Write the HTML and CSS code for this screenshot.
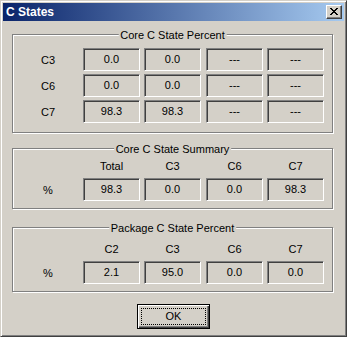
FILE: index.html
```html
<!DOCTYPE html>
<html lang="en">
<head>
    <meta charset="UTF-8">
    <title>C States</title>
    <link rel="stylesheet" href="styles.css">
</head>
<body>

  <div class="window">
    <div class="titlebar">
      <span class="title">C States</span>
      <button class="close-btn" aria-label="Close">
        <svg width="8" height="7" viewBox="0 0 8 7" shape-rendering="crispEdges">
          <path fill="#000" d="M0 0h2v1H0zM6 0h2v1H6zM1 1h2v1H1zM5 1h2v1H5zM2 2h4v1H2zM3 3h2v1H3zM2 4h4v1H2zM1 5h2v1H1zM5 5h2v1H5zM0 6h2v1H0zM6 6h2v1H6z"/>
        </svg>
      </button>
    </div>

    <div class="content">

      <!-- Per core -->
      <div class="group group-core">
        <div class="group-title">Core C State Percent</div>
        <div class="grid">
          <div class="label">C3</div>
          <div class="field">0.0</div>
          <div class="field">0.0</div>
          <div class="field">---</div>
          <div class="field">---</div>

          <div class="label">C6</div>
          <div class="field">0.0</div>
          <div class="field">0.0</div>
          <div class="field">---</div>
          <div class="field">---</div>

          <div class="label">C7</div>
          <div class="field">98.3</div>
          <div class="field">98.3</div>
          <div class="field">---</div>
          <div class="field">---</div>
        </div>
      </div>

      <!-- Summary -->
      <div class="group group-summary">
        <div class="group-title">Core C State Summary</div>
        <div class="grid grid-head">
          <div></div>
          <div class="head">Total</div>
          <div class="head">C3</div>
          <div class="head">C6</div>
          <div class="head">C7</div>

          <div class="label">%</div>
          <div class="field">98.3</div>
          <div class="field">0.0</div>
          <div class="field">0.0</div>
          <div class="field">98.3</div>
        </div>
      </div>

      <!-- Package -->
      <div class="group group-package">
        <div class="group-title">Package C State Percent</div>
        <div class="grid grid-head">
          <div></div>
          <div class="head">C2</div>
          <div class="head">C3</div>
          <div class="head">C6</div>
          <div class="head">C7</div>

          <div class="label">%</div>
          <div class="field">2.1</div>
          <div class="field">95.0</div>
          <div class="field">0.0</div>
          <div class="field">0.0</div>
        </div>
      </div>

      <button class="ok-btn"><span class="ok-focus">OK</span></button>
    </div>
  </div>

</body>
</html>
```

FILE: styles.css
```css
body {
  margin: 0;
  background-color: #d4d0c8;
  font-family: "Liberation Sans", Arial, sans-serif;
  font-size: 11px;
  color: #000;
}

.window {
  box-sizing: border-box;
  width: 347px;
  height: 337px;
  padding: 2px;
  border: 1px solid;
  border-color: #d4d0c8 #404040 #404040 #d4d0c8;
  box-shadow: inset 1px 1px 0 #fff, inset -1px -1px 0 #808080;
  background-color: #d4d0c8;
  display: flex;
  flex-direction: column;
}

.titlebar {
  height: 18px;
  display: flex;
  align-items: center;
  justify-content: space-between;
  padding: 0 2px 0 3px;
  background: linear-gradient(to right, #0a246a, #a6caf0);
}

.title {
  color: #fff;
  font-weight: bold;
  font-size: 12px;
  line-height: 14px;
}

.close-btn {
  box-sizing: border-box;
  width: 16px;
  height: 14px;
  padding: 0;
  border: 1px solid;
  border-color: #fff #404040 #404040 #fff;
  box-shadow: inset -1px -1px 0 #808080;
  background-color: #d4d0c8;
  display: flex;
  align-items: center;
  justify-content: center;
}

.close-btn svg {
  display: block;
  margin: 0 0 1px 0;
}

.content {
  flex: 1;
  display: flex;
  flex-direction: column;
  padding: 13px 11px 0 9px;
}

/* etched group box */
.group {
  position: relative;
  border: 1px solid #808080;
  box-shadow: inset 1px 1px 0 #fff, 1px 1px 0 #fff;
}

.group-title {
  position: absolute;
  top: -6px;
  left: 50%;
  transform: translateX(-50%);
  padding: 0 2px;
  line-height: 13px;
  white-space: nowrap;
  background-color: #d4d0c8;
}

.group-core {
  padding: 13px 0 9px 0;
}

.group-summary {
  margin-top: 15px;
  padding: 11px 0 7px 0;
}

.group-package {
  margin-top: 18px;
  padding: 15px 0 7px 0;
}

.grid {
  display: grid;
  grid-template-columns: 70px 61px 62px 61px 57px;
  grid-auto-rows: 23px;
  row-gap: 3px;
}

.grid-head {
  grid-template-rows: 13px 23px;
  row-gap: 5px;
}

.head {
  width: 57px;
  text-align: center;
  line-height: 13px;
}

.label {
  text-align: center;
  padding-top: 2px;
  line-height: 21px;
}

.field {
  box-sizing: border-box;
  width: 57px;
  height: 23px;
  border: 1px solid;
  border-color: #808080 #fff #fff #808080;
  box-shadow: inset 1px 1px 0 #404040;
  text-align: center;
  line-height: 19px;
  padding-top: 1px;
}

.ok-btn {
  box-sizing: border-box;
  align-self: center;
  width: 73px;
  height: 25px;
  margin: 12px 0 0 2px;
  padding: 3px;
  border: 1px solid #000;
  box-shadow: inset 1px 1px 0 #fff, inset -1px -1px 0 #404040, inset -2px -2px 0 #808080;
  background-color: #d4d0c8;
  font-family: inherit;
  font-size: 11px;
  color: #000;
}

.ok-focus {
  display: block;
  height: 100%;
  box-sizing: border-box;
  border: 1px dotted #000;
  line-height: 15px;
}
```
